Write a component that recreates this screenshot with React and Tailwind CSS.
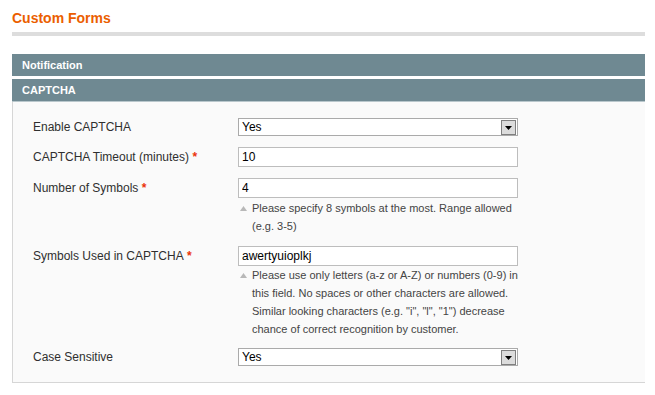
import React from "react";

function SelectBox({ value }) {
  return (
    <div className="w-[280px] h-[18px] border border-[#aaaaaa] bg-white flex items-center justify-between">
      <span className="pl-[3px] text-[12px] leading-[16px] text-[#000]">{value}</span>
      <span className="mr-[1px] w-[15px] h-[15px] border border-[#7f7f7f] bg-[#dcdcdc] flex items-center justify-center">
        <svg width="7" height="4" viewBox="0 0 7 4" className="mt-[2px]">
          <path d="M0 0 L7 0 L3.5 4 Z" fill="#000" />
        </svg>
      </span>
    </div>
  );
}

function TextBox({ value }) {
  return (
    <input
      readOnly
      value={value}
      className="block w-[280px] h-[20px] border border-[#bdbdbd] bg-white pl-[3px] text-[12px] text-[#000] outline-none font-['Liberation_Sans',Arial,sans-serif]"
    />
  );
}

function Note({ lines }) {
  return (
    <div className="flex text-[11px] leading-[18px] text-[#444444]">
      <span className="w-[14px] shrink-0 pl-[2px] pt-[7px]">
        <svg width="7" height="5" viewBox="0 0 7 5" className="block">
          <path d="M3.5 0 L7 5 L0 5 Z" fill="#b8b8b8" />
        </svg>
      </span>
      <div className="whitespace-nowrap">
        {lines.map((l, i) => (
          <div key={i}>{l}</div>
        ))}
      </div>
    </div>
  );
}

function Label({ text, required, h }) {
  return (
    <div className={`w-[205px] shrink-0 flex items-center text-[12px] text-[#2f2f2f] ${h}`}>
      <span>
        {text}
        {required && <span className="text-[#eb340a] font-bold"> *</span>}
      </span>
    </div>
  );
}

export default function App() {
  return (
    <div className="w-[655px] h-[395px] bg-white pl-[12px] pr-[10px] font-['Liberation_Sans',Arial,sans-serif]">
      <div className="h-[32px] pt-[9px]">
        <h3 className="text-[14px] leading-[18px] font-bold text-[#eb5e00]">Custom Forms</h3>
      </div>
      <div className="h-[4px] bg-[#dddddd]" />

      <div className="mt-[18px] h-[22px] bg-[#6f8992] pl-[10px] text-[11px] leading-[22px] font-bold text-white">
        Notification
      </div>
      <div className="mt-[3px] h-[23px] bg-[#6f8992] border-b border-[#b9c7cc] pl-[10px] text-[11px] leading-[22px] font-bold text-white">
        CAPTCHA
      </div>

      <div className="bg-[#fafafa] border-l border-b border-[#d6d6d6] pl-[20px] pt-[16px] pb-[16px]">
        <div className="flex">
          <Label text="Enable CAPTCHA" h="h-[18px]" />
          <SelectBox value="Yes" />
        </div>

        <div className="flex mt-[11px]">
          <Label text="CAPTCHA Timeout (minutes)" required h="h-[20px]" />
          <TextBox value="10" />
        </div>

        <div className="flex items-start mt-[11px]">
          <Label text="Number of Symbols" required h="h-[20px]" />
          <div>
            <TextBox value="4" />
            <div className="mt-[1px]">
              <Note lines={["Please specify 8 symbols at the most. Range allowed", "(e.g. 3-5)"]} />
            </div>
          </div>
        </div>

        <div className="flex items-start mt-[11px]">
          <Label text="Symbols Used in CAPTCHA" required h="h-[20px]" />
          <div>
            <TextBox value="awertyuioplkj" />
            <Note
              lines={[
                "Please use only letters (a-z or A-Z) or numbers (0-9) in",
                "this field. No spaces or other characters are allowed.",
                'Similar looking characters (e.g. "i", "l", "1") decrease',
                "chance of correct recognition by customer.",
              ]}
            />
          </div>
        </div>

        <div className="flex mt-[10px]">
          <Label text="Case Sensitive" h="h-[18px]" />
          <SelectBox value="Yes" />
        </div>
      </div>
    </div>
  );
}
